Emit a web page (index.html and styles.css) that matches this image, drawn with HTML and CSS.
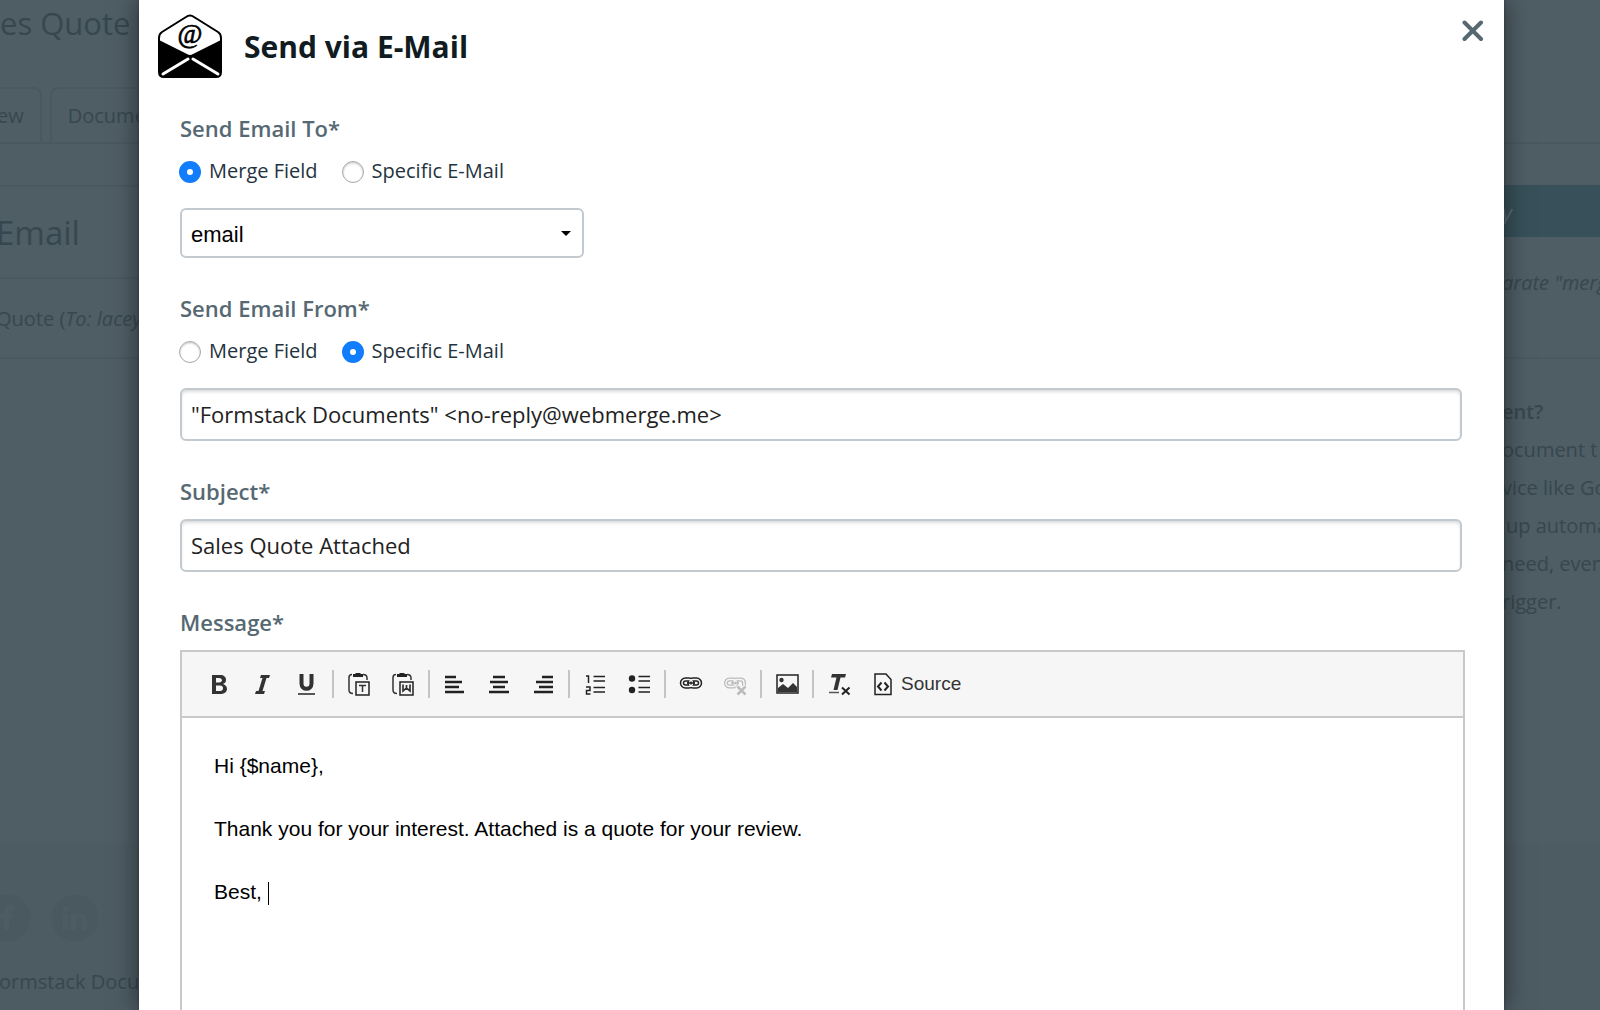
FILE: index.html
```html
<!DOCTYPE html>
<html lang="en">
<head>
<meta charset="utf-8">
<meta name="viewport" content="width=device-width, initial-scale=1">
<title>Send via E-Mail</title>
<link rel="stylesheet" href="styles.css">
</head>
<body>
<div class="page">
  <header class="page-head">
    <h1 class="page-title">es Quote</h1>
    <nav class="tabs">
      <a class="tab tab-first" href="#">ew</a>
      <a class="tab" href="#">Docume</a>
    </nav>
  </header>
  <div class="columns">
    <section class="main">
      <h2 class="main-title">Email</h2>
      <p class="main-row">Quote (<em>To: lacey</em></p>
    </section>
    <aside class="side">
      <div class="side-bar">y</div>
      <p class="side-note">arate "merg</p>
      <div class="side-text">
        <strong>ent?</strong>
        <span>ocument t</span>
        <span>vice like Go</span>
        <span class="side-word">up automa</span>
        <span>need, even</span>
        <span>rigger.</span>
      </div>
    </aside>
  </div>
  <footer class="footer">
    <div class="social">
      <a class="social-link" href="#" aria-label="Facebook"><svg width="48" height="48" viewBox="0 0 48 48"><circle cx="24" cy="24" r="23.500" fill="#4a5860"/><path d="M21 36V25h-4v-5h4v-3c0-4 2-6 6-6h4v5h-3c-2 0-2 1-2 2v2h5l-1 5h-4v11z" fill="#4d5b63"/></svg></a>
      <a class="social-link" href="#" aria-label="LinkedIn"><svg width="48" height="48" viewBox="0 0 48 48"><circle cx="24" cy="24" r="23.500" fill="#4a5860"/><path d="M12 20h5v16h-5zM12 13h5v4h-5zM20 20h5v2c3-4 11-3 11 4v10h-5v-9c0-4-6-4-6 0v9h-5z" fill="#4d5b63"/></svg></a>
    </div>
    <p class="copyright">ormstack Docum</p>
  </footer>
</div>

<div class="overlay">
  <div class="modal" role="dialog" aria-labelledby="dialog-title">
    <header class="modal-head">
      <svg class="mail-icon" width="64" height="64" viewBox="0 0 64 64" aria-hidden="true">
        <path d="M1 24Q1 20 4 18L28 3Q32 0 36 3L60 18Q63 20 63 24V58Q63 63 58 63H6Q1 63 1 58Z" fill="#fff" stroke="#000" stroke-width="2"/>
        <path d="M1 26L29 40Q32 42 35 40L63 26V58Q63 63 58 63H6Q1 63 1 58Z" fill="#000"/>
        <path d="M30 45L5 60M35 45L60 60" stroke="#fff" stroke-width="3" stroke-linecap="round"/>
        <text x="32" y="29" text-anchor="middle" font-family="Liberation Serif, serif" font-size="27" stroke="#000" stroke-width="0.700">@</text>
      </svg>
      <h2 class="modal-title" id="dialog-title">Send via E-Mail</h2>
      <button class="close" type="button" aria-label="Close"><svg width="22" height="22" viewBox="0 0 22 22"><path d="M2.500 2.500L19 19M19 2.500L2.500 19" stroke="#566973" stroke-width="4" stroke-linecap="round"/></svg></button>
    </header>
    <form class="form">
      <fieldset class="field">
        <legend class="label">Send Email To*</legend>
        <div class="radios">
          <label class="choice"><input class="radio" type="radio" name="to" checked>Merge Field</label>
          <label class="choice"><input class="radio" type="radio" name="to">Specific E-Mail</label>
        </div>
        <div class="select-wrap">
          <select class="select" aria-label="Merge field"><option>email</option></select>
          <svg class="arrow" width="10" height="6" viewBox="0 0 10 6" aria-hidden="true"><path d="M0 0h10L5 5z"/></svg>
        </div>
      </fieldset>
      <fieldset class="field">
        <legend class="label">Send Email From*</legend>
        <div class="radios">
          <label class="choice"><input class="radio" type="radio" name="from">Merge Field</label>
          <label class="choice"><input class="radio" type="radio" name="from" checked>Specific E-Mail</label>
        </div>
        <input class="input" type="text" aria-label="From address" value="&quot;Formstack Documents&quot; &lt;no-reply@webmerge.me&gt;">
      </fieldset>
      <div class="field">
        <label class="label" for="subject">Subject*</label>
        <input class="input" id="subject" type="text" value="Sales Quote Attached">
      </div>
      <div class="field field-message">
        <span class="label" id="message-label">Message*</span>
        <div class="editor">
          <div class="toolbar" role="toolbar" aria-label="Formatting">
            <button class="tool" type="button" aria-label="Bold"><svg width="24" height="24" viewBox="0 0 24 24"><path fill-rule="evenodd" d="M5 3h8c4 0 6 2 6 5 0 2-1 3-3 4 2 1 4 2 4 5 0 3-3 5-7 5H5zM9 6v4.500h3c4 0 4-4.500 0-4.500zM9 13.500V19h4c4 0 4-5.500 0-5.500z" fill="#333"/></svg></button>
            <button class="tool" type="button" aria-label="Italic"><svg width="24" height="24" viewBox="0 0 24 24"><path d="M10 3h9l-1 3h-2.500l-4 13H14l-1 3H4l1-3h2.500l4-13H9z" fill="#333"/></svg></button>
            <button class="tool" type="button" aria-label="Underline"><svg width="24" height="24" viewBox="0 0 24 24"><path d="M6.500 2v9.500c0 7 10 7 10 0V2" fill="none" stroke="#333" stroke-width="4"/><path d="M3 22h17" stroke="#222" stroke-width="1.500"/></svg></button>
            <span class="sep"></span>
            <button class="tool" type="button" aria-label="Paste as plain text"><svg width="24" height="24" viewBox="0 0 24 24" fill="none" stroke="#333"><path d="M5 2.500Q2 2.500 2 5.500V18Q2 21.500 6 21.500M16 2.500Q20 2.500 20 6V8" stroke-width="1.500"/><path d="M6 2h2l1-1h4l1 1h2v3H6z" fill="#222" stroke="none"/><path d="M9 10h13v13H9z" stroke="#222" stroke-width="1.500"/><path d="M12 13.500h7M15.500 13v7" stroke-width="1.500"/></svg></button>
            <button class="tool" type="button" aria-label="Paste from Word"><svg width="24" height="24" viewBox="0 0 24 24" fill="none" stroke="#333"><path d="M5 2.500Q2 2.500 2 5.500V18Q2 21.500 6 21.500M16 2.500Q20 2.500 20 6V8" stroke-width="1.500"/><path d="M6 2h2l1-1h4l1 1h2v3H6z" fill="#222" stroke="none"/><path d="M9 10h13v13H9z" stroke="#222" stroke-width="1.500"/><path d="M12 12.500v6.500l3.500-3 3.500 3v-6.500M15.500 13v4" stroke-width="1.700"/></svg></button>
            <span class="sep"></span>
            <button class="tool" type="button" aria-label="Align left"><svg width="24" height="24" viewBox="0 0 24 24"><path d="M2 5h11M2 10h17M2 15h14M2 20h19" stroke="#222" stroke-width="2.500"/></svg></button>
            <button class="tool" type="button" aria-label="Align center"><svg width="24" height="24" viewBox="0 0 24 24"><path d="M6 5h12M3 10h18M6 15h12M2 20h20" stroke="#222" stroke-width="2.500"/></svg></button>
            <button class="tool" type="button" aria-label="Align right"><svg width="24" height="24" viewBox="0 0 24 24"><path d="M11 5h11M5 10h17M8 15h14M3 20h19" stroke="#222" stroke-width="2.500"/></svg></button>
            <span class="sep"></span>
            <button class="tool" type="button" aria-label="Numbered list"><svg width="24" height="24" viewBox="0 0 24 24" fill="none" stroke="#222" stroke-width="1.500"><path d="M10.500 4.500H22M10.500 9H22M10.500 15.500H22M10.500 20H22M3 4h2.500v7M3 15h4v3.500H3.500V22H7.500"/></svg></button>
            <button class="tool" type="button" aria-label="Bulleted list"><svg width="24" height="24" viewBox="0 0 24 24"><path d="M11.500 4.500H23M11.500 9H23M11.500 15.500H23M11.500 20H23" stroke="#222" stroke-width="1.500"/><circle cx="5" cy="6.500" r="3.200" fill="#222"/><circle cx="5" cy="18" r="3.200" fill="#222"/></svg></button>
            <span class="sep"></span>
            <button class="tool" type="button" aria-label="Link"><svg width="24" height="24" viewBox="0 0 24 24" fill="none"><g stroke="#222" stroke-width="4.500"><rect x="3" y="7.500" width="10.500" height="7" rx="3.500"/><rect x="10.500" y="7.500" width="10.500" height="7" rx="3.500"/></g><g stroke="#f6f6f6" stroke-width="1.500"><rect x="3" y="7.500" width="10.500" height="7" rx="3.500"/><rect x="10.500" y="7.500" width="10.500" height="7" rx="3.500"/></g><path d="M8 11h8" stroke="#222" stroke-width="1.500"/></svg></button>
            <button class="tool" type="button" aria-label="Unlink" disabled><svg width="24" height="24" viewBox="0 0 24 24" fill="none"><g stroke="#bbb" stroke-width="4"><rect x="3" y="7.500" width="10.500" height="7" rx="3.500"/><path d="M11 14.500V10.500Q11 7.500 14 7.500H17.500Q21 7.500 21 11V14"/></g><g stroke="#f6f6f6" stroke-width="1.500"><rect x="3" y="7.500" width="10.500" height="7" rx="3.500"/><path d="M11 13V10.500Q11 7.500 14 7.500H17.500Q21 7.500 21 11V13"/></g><path d="M8 11h8" stroke="#bbb" stroke-width="1.500"/><path d="M14 14l9 9M23 14l-9 9" stroke="#f6f6f6" stroke-width="5"/><path d="M14.500 14.500l8 8M22.500 14.500l-8 8" stroke="#bbb" stroke-width="2.500"/></svg></button>
            <span class="sep"></span>
            <button class="tool" type="button" aria-label="Image"><svg width="24" height="24" viewBox="0 0 24 24"><rect x="2" y="3" width="21" height="18" fill="none" stroke="#222" stroke-width="1.500"/><circle cx="6.500" cy="8" r="2.200" fill="#333"/><path d="M3 20v-4l5-4 5 4 5-5 4 4v5z" fill="#333"/></svg></button>
            <span class="sep"></span>
            <button class="tool" type="button" aria-label="Remove format"><svg width="24" height="24" viewBox="0 0 24 24"><path d="M5 2h14l-1 3.500h-4.500L10.500 18h-4l3-12.500H4z" fill="#333"/><path d="M2 20.500h10" stroke="#555" stroke-width="1.500"/><path d="M15 15.500l7.500 7M22.500 15.500l-7.500 7" stroke="#222" stroke-width="2"/></svg></button>
            <button class="tool tool-source" type="button"><svg width="20" height="24" viewBox="0 0 20 24" fill="none" stroke="#222" stroke-width="1.500"><path d="M2 2h11l5 5.500V22.500H2z"/><path d="M8.500 10.500L5 14.500l3.500 4M11.500 10.500l3.500 4-3.500 4" stroke-width="2"/></svg>Source</button>
          </div>
          <div class="message" contenteditable="true" role="textbox" aria-multiline="true" aria-labelledby="message-label">
            <p>Hi {$name},</p>
            <p>Thank you for your interest. Attached is a quote for your review.</p>
            <p>Best, <span class="caret"></span></p>
          </div>
        </div>
      </div>
    </form>
  </div>
</div>
</body>
</html>
```
FILE: styles.css
```css
* { box-sizing: border-box; }

body {
  margin: 0;
  height: 100vh;
  overflow: hidden;
  background: #4f5d65;
  color: #37474f;
  font-family: "Open Sans", "Noto Sans", sans-serif;
  font-size: 20px;
}

h1, h2, p, fieldset, legend { margin: 0; padding: 0; border: 0; font-weight: 400; }

a { color: inherit; text-decoration: none; }

/* Dimmed page behind the dialog */
.page { display: flex; flex-direction: column; height: 100vh; overflow: hidden; white-space: nowrap; }
.page-head { border-bottom: 2px solid #4a5860; }
.page-title { height: 87px; font-size: 31px; line-height: 46px; }
.tabs { display: flex; gap: 8px; margin-left: -3px; }
.tab { height: 55px; padding: 0 16px; border: 2px solid #4a5860; border-bottom: 0; border-radius: 8px 8px 0 0; line-height: 54px; }
.tab-first { padding-left: 0; border-left: 0; border-top-left-radius: 0; }
.columns { display: flex; justify-content: space-between; flex: 1; padding-top: 41px; }
.main { flex: 1; text-indent: -4px; }
.main-title { height: 94px; border: solid #4a5860; border-width: 2px 0; font-size: 33px; line-height: 92px; }
.main-row { height: 80px; border-bottom: 2px solid #4a5860; line-height: 80px; }
.side { width: 98px; }
.side-bar { height: 52px; background: #375059; color: #5b6d74; font-size: 22px; font-style: italic; line-height: 54px; }
.side-note { height: 122px; border-bottom: 2px solid #4a5860; line-height: 92px; font-style: italic; }
.side-text { display: flex; flex-direction: column; padding-top: 34px; line-height: 38px; }
.side-word { padding-left: 4px; }
.side-text strong { font-weight: 600; }
.footer { height: 166px; padding-top: 50px; background: #4d5b63; }
.social { display: flex; gap: 20px; margin-left: -17px; }
.social-link { height: 48px; }
.copyright { line-height: 80px; text-indent: -1px; }

/* Dialog */
.overlay { position: absolute; inset: 0; padding: 0 96px 0 139px; overflow: hidden; }
.modal { display: flex; flex-direction: column; min-height: 100%; background: #fff; box-shadow: 0 0 2px #333, 0 0 24px rgba(0, 0, 0, .5); }
.modal-head { display: flex; align-items: flex-start; padding: 14px 20px 0 19px; height: 113px; }
.modal-title { flex: 1; padding-left: 22px; color: #101c22; font-size: 30px; font-weight: 700; line-height: 66px; }
.close { margin-top: 6px; padding: 0; border: 0; background: none; line-height: 0; }

.form { display: flex; flex: 1; flex-direction: column; gap: 35px; padding: 0 42px 0 41px; }
.field { display: flex; flex-direction: column; min-width: 0; }
.label { display: block; margin-bottom: 13px; color: #566973; font-size: 22px; font-weight: 600; line-height: 30px; }
.radios { display: flex; gap: 25px; margin-bottom: 22px; }
.choice { display: flex; align-items: center; gap: 8px; color: #1f3440; line-height: 30px; }
.radio { flex: none; appearance: none; width: 22px; height: 22px; margin: 2px 0 0 -1px; border: 1px solid #aaa; border-radius: 50%; background: #fff; box-shadow: inset 0 1px 2px rgba(0, 0, 0, .25); }
.radio:checked { border: 8px solid #127dfb; box-shadow: none; }

.select-wrap { position: relative; width: 404px; }
.select { appearance: none; width: 100%; height: 50px; padding: 2px 9px 0; border: 2px solid #c3cacf; border-radius: 6px; background: #fff; color: #000; font: 22px "Liberation Sans", Arial, sans-serif; }
.arrow { position: absolute; right: 13px; top: 23px; }
.input { width: 100%; height: 53px; padding: 0 9px 2px; border: 2px solid #c3cacf; border-radius: 6px; background: #fff; box-shadow: inset 0 3px 4px -2px rgba(0, 0, 0, .2); color: #222; font: 22px "Open Sans", "Noto Sans", sans-serif; }

/* Message editor */
.field-message { flex: 1; margin-right: -3px; }
.editor { display: flex; flex: 1; flex-direction: column; min-height: 360px; border: 2px solid #c9c9c9; border-bottom: 0; }
.toolbar { display: flex; flex-wrap: wrap; align-items: center; padding: 10px 15px; border-bottom: 2px solid #c9c9c9; background: #f6f6f6; }
.tool { display: flex; align-items: center; justify-content: center; width: 44px; height: 44px; padding: 0; border: 0; background: none; color: #333; font: 19px "Liberation Sans", Arial, sans-serif; }
.tool-source { gap: 8px; width: auto; padding: 0 12px; }
.sep { width: 2px; height: 28px; margin: 0 3px; background: #c4c4c4; }
.message { flex: 1; padding: 32px; color: #000; font: 21px/32px "Liberation Sans", Arial, sans-serif; outline: 0; }
.message p { margin-bottom: 31px; }
.caret { display: inline-block; width: 1px; height: 23px; background: #000; vertical-align: middle; }
```
